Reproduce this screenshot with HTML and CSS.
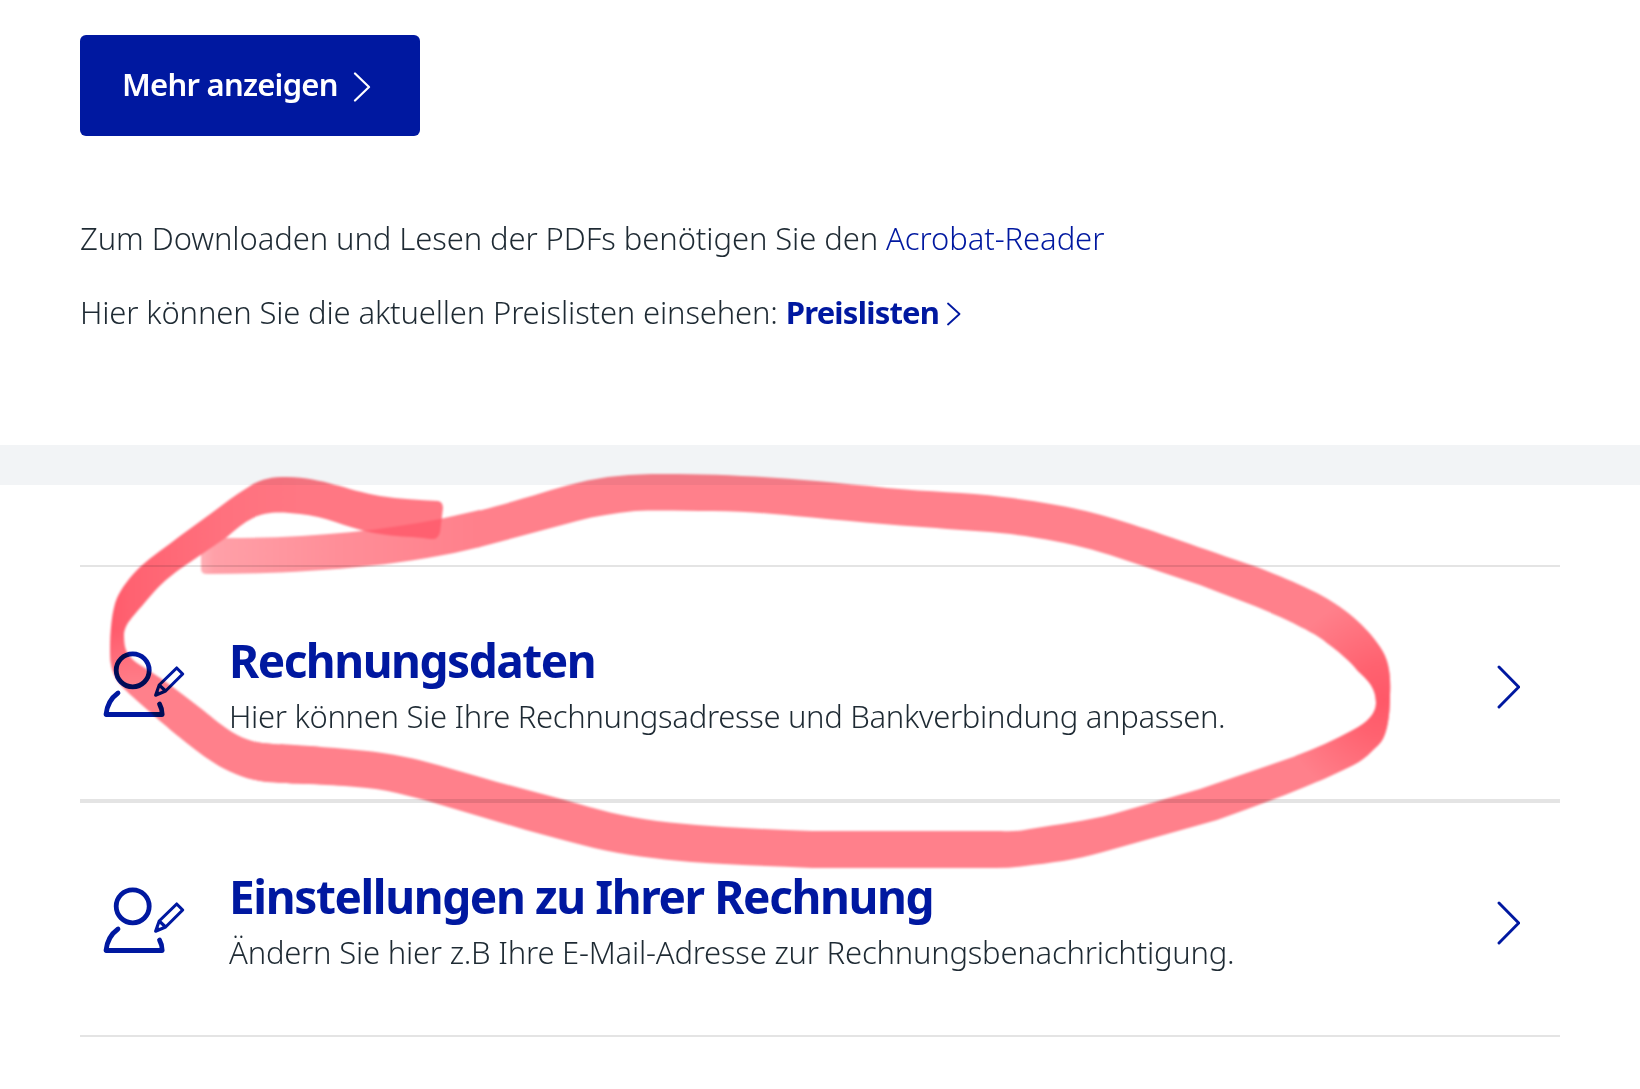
FILE: index.html
```
<!DOCTYPE html>
<html lang="de">
<head>
  <meta charset="utf-8">
  <title>Rechnungen</title>
  <link rel="stylesheet" href="styles.css">
</head>
<body>
  <main class="page">
    <section class="downloads">
      <button class="btn-more">
        <span>Mehr anzeigen</span>
        <svg class="btn-chevron" viewBox="0 0 18 30"><path d="M2 1.5 16 15 2 28.5"/></svg>
      </button>
      <p class="hint hint-reader">Zum Downloaden und Lesen der PDFs benötigen Sie den <a href="#">Acrobat-Reader</a></p>
      <p class="hint hint-prices">Hier können Sie die aktuellen Preislisten einsehen: <a href="#" class="price-link">Preislisten<svg class="link-chevron" viewBox="0 0 14 24"><path d="M1 1.5 12.5 12 1 22.5"/></svg></a></p>
    </section>

    <div class="divider"></div>

    <nav class="settings">
      <a href="#" class="row">
        <svg class="user-icon" viewBox="0 0 84 68">
          <circle cx="30.7" cy="21.3" r="16.5"/>
          <path d="M16 44C9 49 5 56 4 65.500H60.2C60.2 61 59.2 58 57.5 55"/>
          <path class="pencil" d="M53.6 46.2 57.2 36 74.7 19 80.7 25 63.6 42ZM57.2 36 63.6 42M55.5 43.5l1.5 1"/>
        </svg>
        <span class="row-text">
          <strong class="title title-data">Rechnungsdaten</strong>
          <span class="desc desc-data">Hier können Sie Ihre Rechnungsadresse und Bankverbindung anpassen.</span>
        </span>
        <svg class="row-chevron" viewBox="0 0 24 44"><path d="M3 2 22.7 22 3 42"/></svg>
      </a>
      <a href="#" class="row">
        <svg class="user-icon" viewBox="0 0 84 68">
          <circle cx="30.7" cy="21.3" r="16.5"/>
          <path d="M16 44C9 49 5 56 4 65.500H60.2C60.2 61 59.2 58 57.5 55"/>
          <path class="pencil" d="M53.6 46.2 57.2 36 74.7 19 80.7 25 63.6 42ZM57.2 36 63.6 42M55.5 43.5l1.5 1"/>
        </svg>
        <span class="row-text">
          <strong class="title title-settings">Einstellungen zu Ihrer Rechnung</strong>
          <span class="desc desc-settings">Ändern Sie hier z.B Ihre E-Mail-Adresse zur Rechnungsbenachrichtigung.</span>
        </span>
        <svg class="row-chevron" viewBox="0 0 24 44"><path d="M3 2 22.7 22 3 42"/></svg>
      </a>
    </nav>

    <!-- Marker stroke around the first row -->
    <svg class="marker" viewBox="0 0 1640 1089">
      <defs>
        <linearGradient id="fade" gradientUnits="userSpaceOnUse" x1="200" y1="0" x2="480" y2="0">
          <stop offset="0" stop-color="#ffb0b7"/>
          <stop offset="0.05" stop-color="#ffa0a8"/>
          <stop offset="0.5" stop-color="#ff8e98"/>
          <stop offset="1" stop-color="#ff808b"/>
        </linearGradient>
        <radialGradient id="right" gradientUnits="userSpaceOnUse" cx="1384" cy="700" r="105">
          <stop offset="0" stop-color="#ff5868"/>
          <stop offset="0.35" stop-color="#ff6270"/>
          <stop offset="1" stop-color="#ff808b"/>
        </radialGradient>
        <linearGradient id="left" gradientUnits="userSpaceOnUse" x1="108" y1="0" x2="300" y2="0">
          <stop offset="0" stop-color="#ff596a"/>
          <stop offset="0.12" stop-color="#ff6271"/>
          <stop offset="0.6" stop-color="#ff717e"/>
          <stop offset="1" stop-color="#ff7783"/>
        </linearGradient>
        <linearGradient id="low" gradientUnits="userSpaceOnUse" x1="0" y1="630" x2="0" y2="690">
          <stop offset="0" stop-color="#ff808b" stop-opacity="0"/>
          <stop offset="1" stop-color="#ff808b"/>
        </linearGradient>
        <path id="lead" d="M205 538C290 539 370 533 440 519L480 510V547C400 567 300 574 207 574Q201 574 201 569V543Q201 538 205 538Z"/>
        <clipPath id="crossing"><use href="#lead"/></clipPath>
        <path id="end" d="M320 784C300 784 285 783 267 782C248 780 230 773 213 762C190 747 160 721 140 703C121 686 110 678 110 652C110 630 112 610 117 598C122 587 130 577 140 567C152 556 166 547 180 536L213 512C225 503 235 495 247 488C260 479 270 477 287 477C325 478 345 490 380 496C400 499 420 500 438 501Q443 502 443 508L440 532Q438 540 431 539C410 536 392 537 373 533C345 527 325 516 300 514C282 512 266 511 253 518C243 523 235 530 227 537L180 569C166 579 157 588 147 600C133 617 124 624 124 636C124 649 127 654 133 660C139 665 150 671 160 678C174 688 187 698 200 708C218 722 236 740 262 743C280 745 300 746 320 747Z"/>
      </defs>
      <path id="ring" fill="#ff808b" d="M478 511C515 502 545 491 577 483C605 476 630 474 664 474C740 474 800 479 887 488C930 492 965 492 1003 497C1045 502 1082 509 1115 519C1158 532 1200 548 1257 567C1280 576 1297 583 1317 593C1344 607 1367 627 1380 647C1389 660 1391 675 1390 695C1390 708 1389 718 1387 727C1384 740 1380 744 1373 750C1364 760 1354 765 1343 770C1302 790 1260 804 1217 820L1103 852C1075 860 1050 863 1025 866Q1010 868 996 868H812C770 866 730 865 691 862C655 859 625 855 594 848C570 842 548 836 526 830L448 807C421 799 395 791 367 788C340 785 300 784 280 782V744C310 746 340 748 367 751C386 753 402 756 419 760C446 767 470 774 497 782L565 800C595 809 625 817 657 821C705 827 760 829 812 831H1001Q1015 832 1030 829C1059 824 1087 821 1113 814L1200 789L1293 757C1315 749 1335 740 1353 730Q1376 718 1376 703C1376 686 1366 679 1357 670C1349 660 1339 652 1327 643C1317 634 1304 629 1293 623C1265 609 1231 597 1200 585L1110 555C1085 547 1062 542 1037 538C1005 532 970 531 936 528C890 525 840 520 795 516C765 513 740 511 713 511C685 511 660 510 635 511C615 513 596 516 577 521L478 547.500Z"/>
      <clipPath id="ring-clip"><use href="#ring"/></clipPath>
      <circle cx="1384" cy="700" r="105" fill="url(#right)" clip-path="url(#ring-clip)"/>
      <use href="#lead" fill="url(#fade)"/>
      <use href="#end" fill="url(#left)"/>
      <use href="#end" fill="url(#low)"/>
      <g clip-path="url(#crossing)">
        <path fill="#ff6070" d="M365 531C345 527 400 500 438 501Q443 502 443 508L440 532Q438 540 431 539C410 536 392 537 365 531Z"/>
      </g>
    </svg>
  </main>
</body>
</html>
```

FILE: styles.css
```
body {
  margin: 0;
  background: #fff;
  color: #1e2a33;
  font-family: "Noto Sans", "Open Sans", sans-serif;
  font-weight: 300;
}

a {
  color: #0018a0;
  text-decoration: none;
}

svg {
  fill: none;
  stroke: #0018a0;
  stroke-linecap: round;
  stroke-linejoin: round;
  flex-shrink: 0;
}

.page {
  position: relative;
  height: 1089px;
  overflow: hidden;
}

.downloads {
  box-sizing: border-box;
  height: 445px;
  padding: 35px 80px 0;
}

.btn-more {
  display: flex;
  align-items: center;
  box-sizing: border-box;
  width: 340px;
  height: 101px;
  padding: 0 0 0 42px;
  border: none;
  border-radius: 6px;
  background: #0018a0;
  color: #fff;
  font: 600 31px/42px "Noto Sans", sans-serif;
  letter-spacing: -0.74px;
  white-space: nowrap;
}

.btn-more span {
  width: 231px;
  margin-bottom: 4px;
  text-align: left;
}

.btn-chevron {
  width: 18px;
  height: 30px;
  margin-top: 3px;
  stroke: #fff;
  stroke-width: 2.2;
}

.hint {
  margin: 0;
  font-size: 31px;
  line-height: 44px;
  white-space: nowrap;
}

.hint-reader {
  margin-top: 80px;
  letter-spacing: -0.09px;
}

.hint-prices {
  margin-top: 30px;
  letter-spacing: -0.155px;
}

.price-link {
  font-weight: 700;
  letter-spacing: -0.77px;
}

.link-chevron {
  width: 14px;
  height: 24px;
  margin-left: 8px;
  vertical-align: -2px;
  stroke-width: 1.8;
}

.divider {
  height: 40px;
  background: #f2f4f6;
}

.settings {
  padding: 80px 80px 0;
}

.row {
  display: flex;
  align-items: center;
  box-sizing: border-box;
  height: 236px;
  padding: 0 40px 0 22px;
  border-top: 2px solid #e4e4e4;
  border-bottom: 2px solid #e4e4e4;
}

.user-icon {
  width: 84px;
  height: 68px;
  stroke-width: 4.8;
}

.pencil {
  stroke-width: 3.1;
}

.row-text {
  display: flex;
  flex: 1;
  flex-direction: column;
  margin: 1px 0 0 43px;
  white-space: nowrap;
}

.title {
  font-size: 46px;
  line-height: 60px;
  font-weight: 700;
}

.title-data {
  letter-spacing: -1.5px;
}

.title-settings {
  letter-spacing: -1.4px;
}

.desc {
  margin-top: 4px;
  color: #1e2a33;
  font-size: 31px;
  line-height: 44px;
}

.desc-data {
  letter-spacing: -0.32px;
}

.desc-settings {
  letter-spacing: -0.22px;
}

.row-chevron {
  width: 24px;
  height: 44px;
  margin-top: 8px;
  stroke-width: 2.9;
}

.marker {
  position: absolute;
  top: 0;
  left: 0;
  width: 1640px;
  height: 1089px;
  stroke: none;
  mix-blend-mode: multiply;
  filter: blur(0.8px);
  pointer-events: none;
}
```
